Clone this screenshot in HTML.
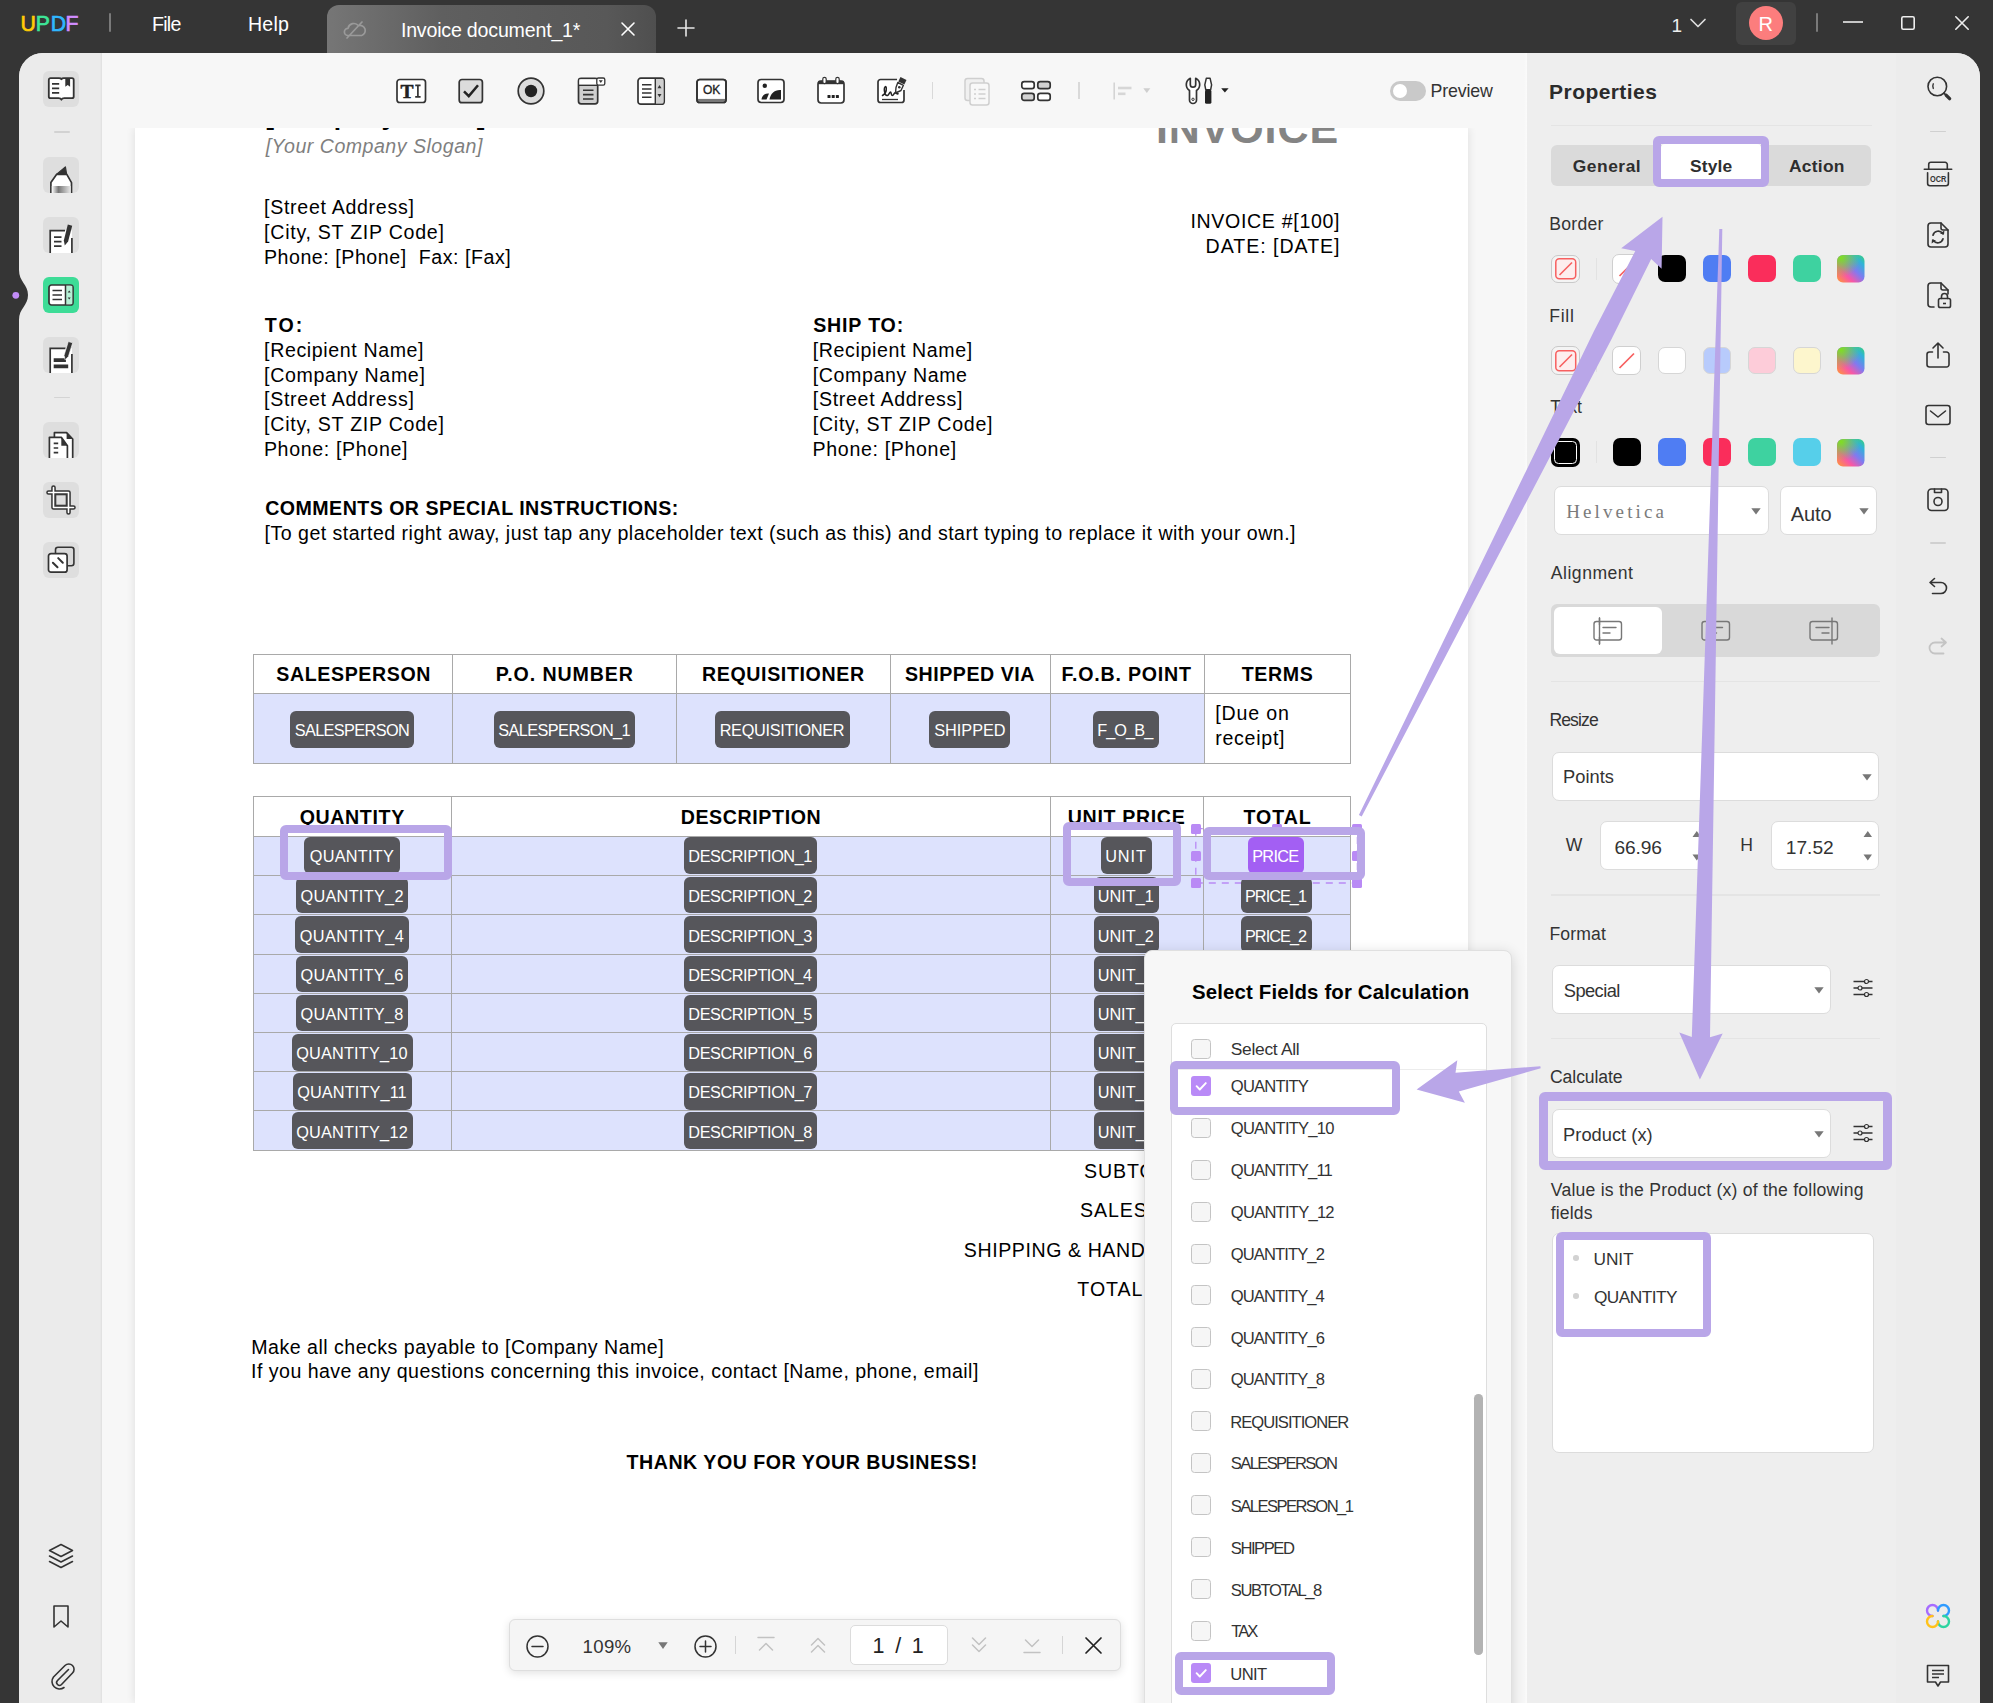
<!DOCTYPE html>
<html><head><meta charset="utf-8"><title>UPDF</title>
<style>
html,body{margin:0;padding:0;}
body{width:1993px;height:1703px;overflow:hidden;background:#353535;position:relative;font-family:"Liberation Sans",sans-serif;}
.b{position:absolute;box-sizing:border-box;}
.t{position:absolute;white-space:pre;}
svg{overflow:visible;}
</style></head><body>
<div class="b main" style="left:19.00px;top:53.00px;width:1961.00px;height:1650.00px;background:#ededed;border-radius:24px 24px 0 0;overflow:hidden;"></div>
<div class="b " style="left:19.00px;top:53.00px;width:83.20px;height:1650.00px;background:#ebebeb;border-radius:24px 0 0 0;box-shadow:inset -2px 0 2px -1px rgba(0,0,0,0.05);"></div>
<div class="b " style="left:102.00px;top:53.00px;width:1425.00px;height:1650.00px;background:#f7f7f7;"></div>
<div class="b " style="left:134.90px;top:127.90px;width:1332.90px;height:1575.10px;background:#fff;box-shadow:0 0 9px rgba(0,0,0,0.11);"></div>
<div class="b " style="left:1896.00px;top:53.00px;width:84.00px;height:1650.00px;background:#ececec;border-radius:0 24px 0 0;"></div>
<span class="t" style="left:20.46px;top:11.81px;font-size:21.20px;line-height:23.68px;color:#ffcb05;font-family:'Liberation Sans',sans-serif;-webkit-text-stroke:0.7px #ffcb05;">U</span>
<span class="t" style="left:35.86px;top:11.81px;font-size:21.20px;line-height:23.68px;color:#3de597;font-family:'Liberation Sans',sans-serif;-webkit-text-stroke:0.7px #3de597;">P</span>
<span class="t" style="left:50.66px;top:11.81px;font-size:21.20px;line-height:23.68px;color:#2fb6ff;font-family:'Liberation Sans',sans-serif;-webkit-text-stroke:0.7px #2fb6ff;">D</span>
<span class="t" style="left:65.46px;top:11.81px;font-size:21.20px;line-height:23.68px;color:#d18cff;font-family:'Liberation Sans',sans-serif;-webkit-text-stroke:0.7px #d18cff;">F</span>
<div class="b " style="left:109.10px;top:13.40px;width:2.00px;height:18.40px;background:#7a7a7a;border-radius:1px;"></div>
<span class="t" style="left:151.89px;top:13.66px;font-size:19.60px;line-height:21.89px;color:#fff;font-family:'Liberation Sans',sans-serif;letter-spacing:-0.668px;">File</span>
<span class="t" style="left:247.99px;top:13.66px;font-size:19.60px;line-height:21.89px;color:#fff;font-family:'Liberation Sans',sans-serif;letter-spacing:0.173px;">Help</span>
<div class="b " style="left:327.00px;top:5.00px;width:329.30px;height:48.00px;background:linear-gradient(90deg,#767676 0%,#5f5f5f 35%,#585858 85%,#4f4f4f 100%);border-radius:12px 12px 0 0;"></div>
<span class="t" style="left:400.89px;top:19.66px;font-size:19.60px;line-height:21.89px;color:#fff;font-family:'Liberation Sans',sans-serif;letter-spacing:-0.191px;">Invoice document_1*</span>
<svg class="b" style="left:343.00px;top:18.00px;" width="24" height="24" viewBox="0 0 24 24" fill="none"><path d="M5 17.5a3.6 3.6 0 0 1 0-7.2 6 6 0 0 1 10.5-2.6 4.8 4.8 0 0 1 3.2 9.8zM4 20L19 4" stroke="#9a9a9a" stroke-width="1.7" stroke-linecap="round" stroke-linejoin="round"/></svg>
<svg class="b" style="left:621.00px;top:22.00px;" width="14" height="14" viewBox="0 0 14 14" fill="none"><path d="M1 1L13 13M13 1L1 13" stroke="#fff" stroke-width="1.6" stroke-linecap="round"/></svg>
<svg class="b" style="left:677.00px;top:19.00px;" width="18" height="18" viewBox="0 0 18 18" fill="none"><path d="M9 1V17M1 9H17" stroke="#e6e6e6" stroke-width="1.6" stroke-linecap="round"/></svg>
<span class="t" style="left:1671.55px;top:14.61px;font-size:19.00px;line-height:21.22px;color:#eee;font-family:'Liberation Sans',sans-serif;">1</span>
<svg class="b" style="left:1690.00px;top:18.00px;" width="16" height="10" viewBox="0 0 16 10" fill="none"><path d="M1 1.5L8 8.5L15 1.5" stroke="#ddd" stroke-width="1.7" stroke-linecap="round" stroke-linejoin="round"/></svg>
<div class="b " style="left:1736.00px;top:2.00px;width:60.00px;height:43.00px;background:#414141;border-radius:6px;"></div>
<div class="b " style="left:1749.00px;top:6.00px;width:34.00px;height:34.00px;background:#fc7d7d;border-radius:50%;"></div>
<span class="t" style="left:1758.42px;top:13.20px;font-size:20.00px;line-height:22.34px;color:#fff;font-family:'Liberation Sans',sans-serif;">R</span>
<div class="b " style="left:1816.30px;top:13.40px;width:1.90px;height:18.40px;background:#7a7a7a;border-radius:1px;"></div>
<svg class="b" style="left:1843.00px;top:21.00px;" width="20" height="2" viewBox="0 0 20 2" fill="none"><path d="M0 1H20" stroke="#eee" stroke-width="1.6"/></svg>
<svg class="b" style="left:1901.00px;top:16.00px;" width="14" height="14" viewBox="0 0 14 14" fill="none"><rect x="0.8" y="0.8" width="12.4" height="12.4" rx="1.5" stroke="#eee" stroke-width="1.6"/></svg>
<svg class="b" style="left:1955.00px;top:16.00px;" width="14" height="14" viewBox="0 0 14 14" fill="none"><path d="M0.8 0.8L13.2 13.2M13.2 0.8L0.8 13.2" stroke="#eee" stroke-width="1.6" stroke-linecap="round"/></svg>
<svg class="b" style="left:0.00px;top:270.00px;" width="30" height="50" viewBox="0 0 30 50" fill="none"><path d="M19 0 C19 12 28 14 28 25 C28 36 19 38 19 50 L0 50 L0 0Z" fill="#353535"/><circle cx="15.8" cy="25.3" r="3.4" fill="#c28cf7"/></svg>
<div class="b" style="left:134px;top:127.9px;width:1334px;height:40px;overflow:hidden;">
<span class="t" style="left:131.21px;top:-25.68px;font-size:26.50px;line-height:29.60px;color:#000;font-family:'Liberation Sans',sans-serif;letter-spacing:0.196px;font-weight:700;">[Company Name]</span>
<span class="t" style="left:1021.92px;top:-24.32px;font-size:43.00px;line-height:48.03px;color:#848484;font-family:'Liberation Sans',sans-serif;letter-spacing:0.891px;font-weight:700;">INVOICE</span>
</div>
<span class="t" style="left:265.67px;top:135.66px;font-size:19.60px;line-height:21.89px;color:#7f7f7f;font-family:'Liberation Sans',sans-serif;letter-spacing:0.487px;font-style:italic;">[Your Company Slogan]</span>
<span class="t" style="left:264.10px;top:197.16px;font-size:19.60px;line-height:21.89px;color:#000;font-family:'Liberation Sans',sans-serif;letter-spacing:0.689px;">[Street Address]</span>
<span class="t" style="left:264.10px;top:221.96px;font-size:19.60px;line-height:21.89px;color:#000;font-family:'Liberation Sans',sans-serif;letter-spacing:0.730px;">[City, ST ZIP Code]</span>
<span class="t" style="left:263.89px;top:246.86px;font-size:19.60px;line-height:21.89px;color:#000;font-family:'Liberation Sans',sans-serif;letter-spacing:0.554px;">Phone: [Phone]  Fax: [Fax]</span>
<span class="t" style="left:1190.39px;top:211.46px;font-size:19.60px;line-height:21.89px;color:#000;font-family:'Liberation Sans',sans-serif;letter-spacing:0.667px;">INVOICE #[100]</span>
<span class="t" style="left:1205.59px;top:236.46px;font-size:19.60px;line-height:21.89px;color:#000;font-family:'Liberation Sans',sans-serif;letter-spacing:0.962px;">DATE: [DATE]</span>
<span class="t" style="left:264.78px;top:315.06px;font-size:19.60px;line-height:21.89px;color:#000;font-family:'Liberation Sans',sans-serif;letter-spacing:2.107px;font-weight:700;">TO:</span>
<span class="t" style="left:264.10px;top:339.86px;font-size:19.60px;line-height:21.89px;color:#000;font-family:'Liberation Sans',sans-serif;letter-spacing:0.611px;">[Recipient Name]</span>
<span class="t" style="left:264.10px;top:364.61px;font-size:19.60px;line-height:21.89px;color:#000;font-family:'Liberation Sans',sans-serif;letter-spacing:0.638px;">[Company Name]</span>
<span class="t" style="left:264.10px;top:389.36px;font-size:19.60px;line-height:21.89px;color:#000;font-family:'Liberation Sans',sans-serif;letter-spacing:0.689px;">[Street Address]</span>
<span class="t" style="left:264.10px;top:414.11px;font-size:19.60px;line-height:21.89px;color:#000;font-family:'Liberation Sans',sans-serif;letter-spacing:0.730px;">[City, ST ZIP Code]</span>
<span class="t" style="left:263.89px;top:438.86px;font-size:19.60px;line-height:21.89px;color:#000;font-family:'Liberation Sans',sans-serif;letter-spacing:0.651px;">Phone: [Phone]</span>
<span class="t" style="left:813.24px;top:315.26px;font-size:19.60px;line-height:21.89px;color:#000;font-family:'Liberation Sans',sans-serif;letter-spacing:0.817px;font-weight:700;">SHIP TO:</span>
<span class="t" style="left:812.80px;top:339.86px;font-size:19.60px;line-height:21.89px;color:#000;font-family:'Liberation Sans',sans-serif;letter-spacing:0.611px;">[Recipient Name]</span>
<span class="t" style="left:812.80px;top:364.61px;font-size:19.60px;line-height:21.89px;color:#000;font-family:'Liberation Sans',sans-serif;letter-spacing:0.601px;">[Company Name</span>
<span class="t" style="left:812.80px;top:389.36px;font-size:19.60px;line-height:21.89px;color:#000;font-family:'Liberation Sans',sans-serif;letter-spacing:0.689px;">[Street Address]</span>
<span class="t" style="left:812.80px;top:414.11px;font-size:19.60px;line-height:21.89px;color:#000;font-family:'Liberation Sans',sans-serif;letter-spacing:0.730px;">[City, ST ZIP Code]</span>
<span class="t" style="left:812.59px;top:438.86px;font-size:19.60px;line-height:21.89px;color:#000;font-family:'Liberation Sans',sans-serif;letter-spacing:0.651px;">Phone: [Phone]</span>
<span class="t" style="left:265.20px;top:498.36px;font-size:19.60px;line-height:21.89px;color:#000;font-family:'Liberation Sans',sans-serif;letter-spacing:0.469px;font-weight:700;">COMMENTS OR SPECIAL INSTRUCTIONS:</span>
<span class="t" style="left:264.60px;top:523.36px;font-size:19.60px;line-height:21.89px;color:#000;font-family:'Liberation Sans',sans-serif;letter-spacing:0.461px;">[To get started right away, just tap any placeholder text (such as this) and start typing to replace it with your own.]</span>
<span class="t" style="left:251.29px;top:1336.66px;font-size:19.60px;line-height:21.89px;color:#000;font-family:'Liberation Sans',sans-serif;letter-spacing:0.481px;">Make all checks payable to [Company Name]</span>
<span class="t" style="left:251.09px;top:1361.06px;font-size:19.60px;line-height:21.89px;color:#000;font-family:'Liberation Sans',sans-serif;letter-spacing:0.457px;">If you have any questions concerning this invoice, contact [Name, phone, email]</span>
<span class="t" style="left:626.58px;top:1451.56px;font-size:19.60px;line-height:21.89px;color:#000;font-family:'Liberation Sans',sans-serif;letter-spacing:0.512px;font-weight:700;">THANK YOU FOR YOUR BUSINESS!</span>
<span class="t" style="left:1083.91px;top:1160.76px;font-size:19.60px;line-height:21.89px;color:#000;font-family:'Liberation Sans',sans-serif;letter-spacing:0.940px;">SUBTOTAL</span>
<span class="t" style="left:1080.11px;top:1200.46px;font-size:19.60px;line-height:21.89px;color:#000;font-family:'Liberation Sans',sans-serif;letter-spacing:0.856px;">SALES TAX</span>
<span class="t" style="left:963.81px;top:1240.16px;font-size:19.60px;line-height:21.89px;color:#000;font-family:'Liberation Sans',sans-serif;letter-spacing:0.569px;">SHIPPING &amp; HANDLING</span>
<span class="t" style="left:1077.36px;top:1279.36px;font-size:19.60px;line-height:21.89px;color:#000;font-family:'Liberation Sans',sans-serif;letter-spacing:0.940px;">TOTAL DUE</span>
<div class="b " style="left:253.20px;top:693.50px;width:951.00px;height:70.50px;background:#dde2fd;"></div>
<div class="b " style="left:252.60px;top:654.00px;width:1098.40px;height:1.15px;background:#a9a9a9;"></div>
<div class="b " style="left:252.60px;top:693.00px;width:1098.40px;height:1.15px;background:#a9a9a9;"></div>
<div class="b " style="left:252.60px;top:763.00px;width:1098.40px;height:1.15px;background:#a9a9a9;"></div>
<div class="b " style="left:253.00px;top:654.80px;width:1.15px;height:109.20px;background:#a9a9a9;"></div>
<div class="b " style="left:452.00px;top:654.80px;width:1.15px;height:109.20px;background:#a9a9a9;"></div>
<div class="b " style="left:676.00px;top:654.80px;width:1.15px;height:109.20px;background:#a9a9a9;"></div>
<div class="b " style="left:890.00px;top:654.80px;width:1.15px;height:109.20px;background:#a9a9a9;"></div>
<div class="b " style="left:1050.00px;top:654.80px;width:1.15px;height:109.20px;background:#a9a9a9;"></div>
<div class="b " style="left:1204.00px;top:654.80px;width:1.15px;height:109.20px;background:#a9a9a9;"></div>
<div class="b " style="left:1350.00px;top:654.80px;width:1.15px;height:109.20px;background:#a9a9a9;"></div>
<span class="t" style="left:276.19px;top:664.26px;font-size:19.60px;line-height:21.89px;color:#000;font-family:'Liberation Sans',sans-serif;letter-spacing:0.626px;font-weight:700;">SALESPERSON</span>
<span class="t" style="left:495.74px;top:664.26px;font-size:19.60px;line-height:21.89px;color:#000;font-family:'Liberation Sans',sans-serif;letter-spacing:0.906px;font-weight:700;">P.O. NUMBER</span>
<span class="t" style="left:701.94px;top:664.26px;font-size:19.60px;line-height:21.89px;color:#000;font-family:'Liberation Sans',sans-serif;letter-spacing:0.631px;font-weight:700;">REQUISITIONER</span>
<span class="t" style="left:904.89px;top:664.26px;font-size:19.60px;line-height:21.89px;color:#000;font-family:'Liberation Sans',sans-serif;letter-spacing:0.541px;font-weight:700;">SHIPPED VIA</span>
<span class="t" style="left:1061.49px;top:664.26px;font-size:19.60px;line-height:21.89px;color:#000;font-family:'Liberation Sans',sans-serif;letter-spacing:0.786px;font-weight:700;">F.O.B. POINT</span>
<span class="t" style="left:1241.78px;top:664.26px;font-size:19.60px;line-height:21.89px;color:#000;font-family:'Liberation Sans',sans-serif;letter-spacing:0.596px;font-weight:700;">TERMS</span>
<span class="t" style="left:1215.20px;top:703.36px;font-size:19.60px;line-height:21.89px;color:#000;font-family:'Liberation Sans',sans-serif;letter-spacing:0.837px;">[Due on</span>
<span class="t" style="left:1215.30px;top:728.06px;font-size:19.60px;line-height:21.89px;color:#000;font-family:'Liberation Sans',sans-serif;letter-spacing:0.703px;">receipt]</span>
<div class="b " style="left:253.20px;top:836.50px;width:1097.30px;height:313.50px;background:#dde2fd;"></div>
<div class="b " style="left:252.60px;top:796.00px;width:1098.40px;height:1.15px;background:#a9a9a9;"></div>
<div class="b " style="left:252.60px;top:836.00px;width:1098.40px;height:1.15px;background:#a9a9a9;"></div>
<div class="b " style="left:252.60px;top:875.00px;width:1098.40px;height:1.15px;background:#a9a9a9;"></div>
<div class="b " style="left:252.60px;top:914.00px;width:1098.40px;height:1.15px;background:#a9a9a9;"></div>
<div class="b " style="left:252.60px;top:954.00px;width:1098.40px;height:1.15px;background:#a9a9a9;"></div>
<div class="b " style="left:252.60px;top:993.00px;width:1098.40px;height:1.15px;background:#a9a9a9;"></div>
<div class="b " style="left:252.60px;top:1032.00px;width:1098.40px;height:1.15px;background:#a9a9a9;"></div>
<div class="b " style="left:252.60px;top:1071.00px;width:1098.40px;height:1.15px;background:#a9a9a9;"></div>
<div class="b " style="left:252.60px;top:1110.00px;width:1098.40px;height:1.15px;background:#a9a9a9;"></div>
<div class="b " style="left:252.60px;top:1150.00px;width:1098.40px;height:1.15px;background:#a9a9a9;"></div>
<div class="b " style="left:253.00px;top:797.00px;width:1.15px;height:353.20px;background:#a9a9a9;"></div>
<div class="b " style="left:451.00px;top:797.00px;width:1.15px;height:353.20px;background:#a9a9a9;"></div>
<div class="b " style="left:1050.00px;top:797.00px;width:1.15px;height:353.20px;background:#a9a9a9;"></div>
<div class="b " style="left:1203.00px;top:797.00px;width:1.15px;height:353.20px;background:#a9a9a9;"></div>
<div class="b " style="left:1350.00px;top:797.00px;width:1.15px;height:353.20px;background:#a9a9a9;"></div>
<span class="t" style="left:299.65px;top:807.26px;font-size:19.60px;line-height:21.89px;color:#000;font-family:'Liberation Sans',sans-serif;letter-spacing:0.635px;font-weight:700;">QUANTITY</span>
<span class="t" style="left:680.64px;top:807.26px;font-size:19.60px;line-height:21.89px;color:#000;font-family:'Liberation Sans',sans-serif;letter-spacing:0.618px;font-weight:700;">DESCRIPTION</span>
<span class="t" style="left:1067.82px;top:807.26px;font-size:19.60px;line-height:21.89px;color:#000;font-family:'Liberation Sans',sans-serif;letter-spacing:0.652px;font-weight:700;">UNIT PRICE</span>
<span class="t" style="left:1243.53px;top:807.26px;font-size:19.60px;line-height:21.89px;color:#000;font-family:'Liberation Sans',sans-serif;letter-spacing:0.953px;font-weight:700;">TOTAL</span>
<svg class="b" style="left:1190.00px;top:822.00px;" width="176" height="68" viewBox="0 0 176 68" fill="none"><path d="M5.800 6.700V61M5.800 61H167.400M167.400 61V6.700M5.800 6.700H167.400" stroke="#b98af5" stroke-width="1.300" stroke-dasharray="7 6" fill="none"/></svg>
<div class="b " style="left:1190.80px;top:823.70px;width:10.00px;height:10.00px;background:#b98af5;border-radius:1.5px;"></div>
<div class="b " style="left:1190.80px;top:850.80px;width:10.00px;height:10.00px;background:#b98af5;border-radius:1.5px;"></div>
<div class="b " style="left:1190.80px;top:878.00px;width:10.00px;height:10.00px;background:#b98af5;border-radius:1.5px;"></div>
<div class="b " style="left:1271.60px;top:823.70px;width:10.00px;height:10.00px;background:#b98af5;border-radius:1.5px;"></div>
<div class="b " style="left:1271.60px;top:878.00px;width:10.00px;height:10.00px;background:#b98af5;border-radius:1.5px;"></div>
<div class="b " style="left:1352.40px;top:823.70px;width:10.00px;height:10.00px;background:#b98af5;border-radius:1.5px;"></div>
<div class="b " style="left:1352.40px;top:850.80px;width:10.00px;height:10.00px;background:#b98af5;border-radius:1.5px;"></div>
<div class="b " style="left:1352.40px;top:878.00px;width:10.00px;height:10.00px;background:#b98af5;border-radius:1.5px;"></div>
<div class="b " style="left:290.00px;top:710.70px;width:124.00px;height:37.30px;background:#56565b;border-radius:6px;"></div>
<span class="t" style="left:294.76px;top:721.30px;font-size:16.30px;line-height:18.21px;color:#fff;font-family:'Liberation Sans',sans-serif;letter-spacing:-0.633px;">SALESPERSON</span>
<div class="b " style="left:494.00px;top:710.70px;width:141.00px;height:37.30px;background:#56565b;border-radius:6px;"></div>
<span class="t" style="left:498.26px;top:721.30px;font-size:16.30px;line-height:18.21px;color:#fff;font-family:'Liberation Sans',sans-serif;letter-spacing:-0.583px;">SALESPERSON_1</span>
<div class="b " style="left:715.00px;top:710.70px;width:135.00px;height:37.30px;background:#56565b;border-radius:6px;"></div>
<span class="t" style="left:719.66px;top:721.30px;font-size:16.30px;line-height:18.21px;color:#fff;font-family:'Liberation Sans',sans-serif;letter-spacing:-0.292px;">REQUISITIONER</span>
<div class="b " style="left:929.40px;top:710.70px;width:81.00px;height:37.30px;background:#56565b;border-radius:6px;"></div>
<span class="t" style="left:934.16px;top:721.30px;font-size:16.30px;line-height:18.21px;color:#fff;font-family:'Liberation Sans',sans-serif;letter-spacing:-0.007px;">SHIPPED</span>
<div class="b " style="left:1093.00px;top:710.70px;width:66.00px;height:37.30px;background:#56565b;border-radius:6px;"></div>
<span class="t" style="left:1097.16px;top:721.30px;font-size:16.30px;line-height:18.21px;color:#fff;font-family:'Liberation Sans',sans-serif;letter-spacing:-0.910px;">F_O_B_</span>
<div class="b " style="left:304.00px;top:837.00px;width:96.00px;height:37.00px;background:#56565b;border-radius:6px;"></div>
<span class="t" style="left:309.73px;top:847.45px;font-size:16.30px;line-height:18.21px;color:#fff;font-family:'Liberation Sans',sans-serif;letter-spacing:0.246px;">QUANTITY</span>
<div class="b " style="left:684.20px;top:837.00px;width:133.00px;height:37.00px;background:#56565b;border-radius:6px;"></div>
<span class="t" style="left:688.36px;top:847.45px;font-size:16.30px;line-height:18.21px;color:#fff;font-family:'Liberation Sans',sans-serif;letter-spacing:-0.450px;">DESCRIPTION_1</span>
<div class="b " style="left:1100.50px;top:837.00px;width:51.00px;height:37.00px;background:#56565b;border-radius:6px;"></div>
<span class="t" style="left:1105.24px;top:847.45px;font-size:16.30px;line-height:18.21px;color:#fff;font-family:'Liberation Sans',sans-serif;letter-spacing:0.868px;">UNIT</span>
<div class="b " style="left:1248.00px;top:837.00px;width:56.00px;height:37.00px;background:#a35ff3;border-radius:6px;"></div>
<span class="t" style="left:1252.16px;top:847.45px;font-size:16.30px;line-height:18.21px;color:#fff;font-family:'Liberation Sans',sans-serif;letter-spacing:-0.695px;">PRICE</span>
<div class="b " style="left:295.75px;top:877.10px;width:112.50px;height:36.40px;background:#56565b;border-radius:6px;"></div>
<span class="t" style="left:300.48px;top:887.25px;font-size:16.30px;line-height:18.21px;color:#fff;font-family:'Liberation Sans',sans-serif;letter-spacing:0.283px;">QUANTITY_2</span>
<div class="b " style="left:684.20px;top:877.10px;width:133.00px;height:36.40px;background:#56565b;border-radius:6px;"></div>
<span class="t" style="left:688.36px;top:887.25px;font-size:16.30px;line-height:18.21px;color:#fff;font-family:'Liberation Sans',sans-serif;letter-spacing:-0.448px;">DESCRIPTION_2</span>
<div class="b " style="left:1093.50px;top:877.10px;width:65.00px;height:36.40px;background:#56565b;border-radius:6px;"></div>
<span class="t" style="left:1097.74px;top:887.25px;font-size:16.30px;line-height:18.21px;color:#fff;font-family:'Liberation Sans',sans-serif;letter-spacing:-0.021px;">UNIT_1</span>
<div class="b " style="left:1240.80px;top:877.10px;width:71.00px;height:36.40px;background:#56565b;border-radius:6px;"></div>
<span class="t" style="left:1244.96px;top:887.25px;font-size:16.30px;line-height:18.21px;color:#fff;font-family:'Liberation Sans',sans-serif;letter-spacing:-0.969px;">PRICE_1</span>
<div class="b " style="left:295.00px;top:916.20px;width:114.00px;height:36.70px;background:#56565b;border-radius:6px;"></div>
<span class="t" style="left:299.73px;top:926.50px;font-size:16.30px;line-height:18.21px;color:#fff;font-family:'Liberation Sans',sans-serif;letter-spacing:0.412px;">QUANTITY_4</span>
<div class="b " style="left:684.20px;top:916.20px;width:133.00px;height:36.70px;background:#56565b;border-radius:6px;"></div>
<span class="t" style="left:688.36px;top:926.50px;font-size:16.30px;line-height:18.21px;color:#fff;font-family:'Liberation Sans',sans-serif;letter-spacing:-0.456px;">DESCRIPTION_3</span>
<div class="b " style="left:1093.50px;top:916.20px;width:65.00px;height:36.70px;background:#56565b;border-radius:6px;"></div>
<span class="t" style="left:1097.74px;top:926.50px;font-size:16.30px;line-height:18.21px;color:#fff;font-family:'Liberation Sans',sans-serif;letter-spacing:-0.017px;">UNIT_2</span>
<div class="b " style="left:1240.80px;top:916.20px;width:71.00px;height:36.70px;background:#56565b;border-radius:6px;"></div>
<span class="t" style="left:1244.96px;top:926.50px;font-size:16.30px;line-height:18.21px;color:#fff;font-family:'Liberation Sans',sans-serif;letter-spacing:-0.965px;">PRICE_2</span>
<div class="b " style="left:295.75px;top:955.60px;width:112.50px;height:36.50px;background:#56565b;border-radius:6px;"></div>
<span class="t" style="left:300.48px;top:965.80px;font-size:16.30px;line-height:18.21px;color:#fff;font-family:'Liberation Sans',sans-serif;letter-spacing:0.272px;">QUANTITY_6</span>
<div class="b " style="left:684.20px;top:955.60px;width:133.00px;height:36.50px;background:#56565b;border-radius:6px;"></div>
<span class="t" style="left:688.36px;top:965.80px;font-size:16.30px;line-height:18.21px;color:#fff;font-family:'Liberation Sans',sans-serif;letter-spacing:-0.476px;">DESCRIPTION_4</span>
<div class="b " style="left:1093.50px;top:955.60px;width:65.00px;height:36.50px;background:#56565b;border-radius:6px;"></div>
<span class="t" style="left:1097.74px;top:965.80px;font-size:16.30px;line-height:18.21px;color:#fff;font-family:'Liberation Sans',sans-serif;letter-spacing:-0.037px;">UNIT_3</span>
<div class="b " style="left:295.75px;top:994.80px;width:112.50px;height:36.50px;background:#56565b;border-radius:6px;"></div>
<span class="t" style="left:300.48px;top:1005.00px;font-size:16.30px;line-height:18.21px;color:#fff;font-family:'Liberation Sans',sans-serif;letter-spacing:0.271px;">QUANTITY_8</span>
<div class="b " style="left:684.20px;top:994.80px;width:133.00px;height:36.50px;background:#56565b;border-radius:6px;"></div>
<span class="t" style="left:688.36px;top:1005.00px;font-size:16.30px;line-height:18.21px;color:#fff;font-family:'Liberation Sans',sans-serif;letter-spacing:-0.459px;">DESCRIPTION_5</span>
<div class="b " style="left:1093.50px;top:994.80px;width:65.00px;height:36.50px;background:#56565b;border-radius:6px;"></div>
<span class="t" style="left:1097.74px;top:1005.00px;font-size:16.30px;line-height:18.21px;color:#fff;font-family:'Liberation Sans',sans-serif;letter-spacing:-0.085px;">UNIT_4</span>
<div class="b " style="left:291.50px;top:1034.00px;width:121.00px;height:36.50px;background:#56565b;border-radius:6px;"></div>
<span class="t" style="left:296.23px;top:1044.20px;font-size:16.30px;line-height:18.21px;color:#fff;font-family:'Liberation Sans',sans-serif;letter-spacing:0.180px;">QUANTITY_10</span>
<div class="b " style="left:684.20px;top:1034.00px;width:133.00px;height:36.50px;background:#56565b;border-radius:6px;"></div>
<span class="t" style="left:688.36px;top:1044.20px;font-size:16.30px;line-height:18.21px;color:#fff;font-family:'Liberation Sans',sans-serif;letter-spacing:-0.456px;">DESCRIPTION_6</span>
<div class="b " style="left:1093.50px;top:1034.00px;width:65.00px;height:36.50px;background:#56565b;border-radius:6px;"></div>
<span class="t" style="left:1097.74px;top:1044.20px;font-size:16.30px;line-height:18.21px;color:#fff;font-family:'Liberation Sans',sans-serif;letter-spacing:-0.044px;">UNIT_5</span>
<div class="b " style="left:292.50px;top:1073.20px;width:119.00px;height:36.50px;background:#56565b;border-radius:6px;"></div>
<span class="t" style="left:297.23px;top:1083.40px;font-size:16.30px;line-height:18.21px;color:#fff;font-family:'Liberation Sans',sans-serif;letter-spacing:0.117px;">QUANTITY_11</span>
<div class="b " style="left:684.20px;top:1073.20px;width:133.00px;height:36.50px;background:#56565b;border-radius:6px;"></div>
<span class="t" style="left:688.36px;top:1083.40px;font-size:16.30px;line-height:18.21px;color:#fff;font-family:'Liberation Sans',sans-serif;letter-spacing:-0.448px;">DESCRIPTION_7</span>
<div class="b " style="left:1093.50px;top:1073.20px;width:65.00px;height:36.50px;background:#56565b;border-radius:6px;"></div>
<span class="t" style="left:1097.74px;top:1083.40px;font-size:16.30px;line-height:18.21px;color:#fff;font-family:'Liberation Sans',sans-serif;letter-spacing:-0.037px;">UNIT_6</span>
<div class="b " style="left:291.50px;top:1112.40px;width:121.00px;height:36.50px;background:#56565b;border-radius:6px;"></div>
<span class="t" style="left:296.23px;top:1122.60px;font-size:16.30px;line-height:18.21px;color:#fff;font-family:'Liberation Sans',sans-serif;letter-spacing:0.199px;">QUANTITY_12</span>
<div class="b " style="left:684.20px;top:1112.40px;width:133.00px;height:36.50px;background:#56565b;border-radius:6px;"></div>
<span class="t" style="left:688.36px;top:1122.60px;font-size:16.30px;line-height:18.21px;color:#fff;font-family:'Liberation Sans',sans-serif;letter-spacing:-0.457px;">DESCRIPTION_8</span>
<div class="b " style="left:1093.50px;top:1112.40px;width:65.00px;height:36.50px;background:#56565b;border-radius:6px;"></div>
<span class="t" style="left:1097.74px;top:1122.60px;font-size:16.30px;line-height:18.21px;color:#fff;font-family:'Liberation Sans',sans-serif;letter-spacing:-0.017px;">UNIT_7</span>
<div class="b " style="left:102.00px;top:53.00px;width:1425.00px;height:74.90px;background:#f7f7f7;"></div>
<svg class="b" style="left:396.00px;top:76.30px;" width="30" height="30" viewBox="0 0 30 30" fill="none"><rect x="1" y="3.5" width="28.5" height="23" rx="2.8" fill="#fff" stroke="#333" stroke-width="1.7"/><text x="4.6" y="21.8" font-family="Liberation Serif,serif" font-weight="700" font-size="19.5" fill="#222" stroke="#222" stroke-width="0.5">T</text><path d="M19.2 9.3h5.4M21.9 9.3v11.6M19.2 20.9h5.4" stroke="#333" stroke-width="1.7"/></svg>
<svg class="b" style="left:456.00px;top:76.30px;" width="30" height="30" viewBox="0 0 30 30" fill="none"><rect x="3.2" y="3.5" width="23.2" height="23.2" rx="2.8" fill="#dcdcdc" stroke="#333" stroke-width="1.7"/><path d="M8 15.3l4.8 4.8L22 9.2" stroke="#222" stroke-width="2.5" fill="none"/></svg>
<svg class="b" style="left:516.00px;top:76.30px;" width="30" height="30" viewBox="0 0 30 30" fill="none"><circle cx="15" cy="15" r="12.8" fill="#dcdcdc" stroke="#333" stroke-width="1.7"/><circle cx="15" cy="15" r="6.2" fill="#222"/></svg>
<svg class="b" style="left:576.00px;top:76.30px;" width="30" height="30" viewBox="0 0 30 30" fill="none"><rect x="2.5" y="2.3" width="19.2" height="25.6" rx="2.6" fill="#cfcfcf" stroke="#333" stroke-width="1.7"/><path d="M3.3 3.300h17.600v5.700H3.300z" fill="#fff"/><path d="M2.500 9.300h19" stroke="#333" stroke-width="1.400"/><path d="M7 14.200h10.500M7 18.600h10.500M7 23h10.500" stroke="#333" stroke-width="1.600"/><rect x="20.800" y="2" width="8" height="7.200" rx="1.600" fill="#fff" stroke="#333" stroke-width="1.300"/><path d="M22.800 4.300h4l-2 2.800z" fill="#333"/></svg>
<svg class="b" style="left:636.00px;top:76.30px;" width="30" height="30" viewBox="0 0 30 30" fill="none"><rect x="2" y="2.200" width="26.200" height="26" rx="2.800" fill="#fff" stroke="#333" stroke-width="1.700"/><path d="M19.500 3h7a1 1 0 0 1 1 1v22.500a1 1 0 0 1-1 1h-7z" fill="#cfcfcf"/><path d="M19.300 2.500v25.500" stroke="#333" stroke-width="1.400"/><path d="M6 8.800h9.500M6 12.900h9.500M6 17h9.500M6 21.300h9.500" stroke="#333" stroke-width="1.500"/><path d="M21.500 12.300l2-3.300 2 3.300zM21.500 18l2 3.300 2-3.300z" fill="#333"/></svg>
<svg class="b" style="left:696.00px;top:76.30px;" width="30" height="30" viewBox="0 0 30 30" fill="none"><rect x="1" y="3.500" width="29" height="23" rx="2.800" fill="#fff" stroke="#333" stroke-width="1.700"/><path d="M2 24.300h27" stroke="#777" stroke-width="2.800"/><rect x="1" y="3.500" width="29" height="23" rx="2.800" fill="none" stroke="#333" stroke-width="1.700"/><text x="7" y="18" font-family="Liberation Sans,sans-serif" font-weight="400" font-size="12" fill="#222" stroke="#222" stroke-width="0.350">OK</text></svg>
<svg class="b" style="left:756.00px;top:76.30px;" width="30" height="30" viewBox="0 0 30 30" fill="none"><rect x="2" y="3.500" width="26" height="23" rx="3.200" fill="#fff" stroke="#333" stroke-width="1.700"/><circle cx="8.800" cy="9.800" r="2.200" fill="#222"/><path d="M5.500 23.500c.5-4 3.500-6.500 7.500-6l-2.500 6zM13.500 23.500c1-6 5-10 11.500-9.500v9.500z" fill="#222"/></svg>
<svg class="b" style="left:816.00px;top:76.30px;" width="30" height="30" viewBox="0 0 30 30" fill="none"><rect x="2" y="5" width="26" height="22" rx="3.200" fill="#fff" stroke="#333" stroke-width="1.700"/><path d="M2.500 6.500h25" stroke="#333" stroke-width="3.400"/><rect x="6.800" y="1.300" width="3.400" height="6.400" rx="1.700" fill="#fff" stroke="#333" stroke-width="1.200"/><rect x="19.800" y="1.300" width="3.400" height="6.400" rx="1.700" fill="#fff" stroke="#333" stroke-width="1.200"/><rect x="11.500" y="19" width="3" height="3" rx=".6" fill="#222"/><rect x="15.700" y="19" width="3" height="3" rx=".6" fill="#222"/><rect x="19.900" y="19" width="3" height="3" rx=".6" fill="#222"/></svg>
<svg class="b" style="left:876.00px;top:76.30px;" width="30" height="30" viewBox="0 0 30 30" fill="none"><path d="M21 3.500H4.500a2.500 2.500 0 0 0-2.500 2.500v18a2.500 2.500 0 0 0 2.500 2.500h21a2.500 2.500 0 0 0 2.500-2.500V14" stroke="#333" stroke-width="1.700" fill="#fff"/><path d="M6.500 19.500c2.500-1.500 4-4.500 3.800-7.500-.2-2.500-2.200-1.500-2 2 .2 3 1.300 6 3.200 5.500 1.500-.4 2-3.500 3-3.500s.3 3.500 1.800 3.500 1.500-2.500 2.800-2.700 1.500 1.500 3 1" stroke="#222" stroke-width="1.500" fill="none" stroke-linecap="round"/><path d="M24.500 1l6 3-2.200 4.500-6-3z" fill="#333"/><path d="M21.800 6.500l5.600 2.800-2.400 5.200-5.500 2.500.5-5.500z" fill="#fff" stroke="#333" stroke-width="1.400" stroke-linejoin="round"/><circle cx="23.300" cy="11.300" r="1.300" fill="#333"/><path d="M6 23.500h16" stroke="#333" stroke-width="1.300"/></svg>
<div class="b " style="left:931.50px;top:82.00px;width:1.20px;height:17.00px;background:#d9d9d9;"></div>
<svg class="b" style="left:962.00px;top:76.30px;" width="30" height="30" viewBox="0 0 30 30" fill="none"><rect x="3" y="2.5" width="19" height="22" rx="2.5" fill="#f0f0f0" stroke="#cfcfcf" stroke-width="1.5"/><rect x="8" y="7" width="19" height="22" rx="2.5" fill="#f8f8f8" stroke="#cfcfcf" stroke-width="1.5"/><path d="M12 13.5h2M16.5 13.5h7M12 18h2M16.5 18h7M12 22.5h2M16.5 22.5h7" stroke="#cfcfcf" stroke-width="1.4"/></svg>
<svg class="b" style="left:1021.00px;top:76.20px;" width="30" height="30" viewBox="0 0 30 30" fill="none"><rect x="0.8" y="5.700" width="12.400" height="7" rx="2.400" stroke="#333" stroke-width="1.700" fill="#fff"/><rect x="16.800" y="5.700" width="12.400" height="7" rx="2.400" stroke="#333" stroke-width="1.700" fill="#d2d2d2"/><rect x="0.8" y="17.300" width="12.400" height="7" rx="2.400" stroke="#333" stroke-width="1.700" fill="#d2d2d2"/><rect x="16.800" y="17.300" width="12.400" height="7" rx="2.400" stroke="#333" stroke-width="1.700" fill="#fff"/></svg>
<div class="b " style="left:1078.40px;top:82.00px;width:1.20px;height:17.00px;background:#d9d9d9;"></div>
<svg class="b" style="left:1105.50px;top:76.00px;" width="30" height="30" viewBox="0 0 30 30" fill="none"><path d="M8.200 6.500v17" stroke="#d2d2d2" stroke-width="1.500"/><path d="M12 12h13.500" stroke="#d6d6d6" stroke-width="2.600"/><path d="M12 17.800h7.500" stroke="#d6d6d6" stroke-width="2.600"/></svg>
<svg class="b" style="left:1142.50px;top:88.30px;" width="8" height="6" viewBox="0 0 8 6" fill="none"><path d="M0.300 0.300h7L3.800 5z" fill="#cfcfcf"/></svg>
<svg class="b" style="left:1185.00px;top:76.00px;" width="30" height="30" viewBox="0 0 30 30" fill="none"><path d="M5.300 2.300v6.200a2.700 2.700 0 0 0 5.400 0V2.300a7 7 0 0 1 .8 12.200V24a3.500 3.500 0 0 1-7 0v-9.500a7 7 0 0 1 .8-12.200z" stroke="#333" stroke-width="1.700" fill="#fff" stroke-linejoin="round"/><circle cx="8" cy="23.300" r="1.200" fill="none" stroke="#333" stroke-width="1"/><path d="M21.300 2.300h3.800l1.500 6.500-1 5h-4.800l-1-5z" fill="#fff" stroke="#333" stroke-width="1.500" stroke-linejoin="round"/><rect x="20" y="13.800" width="6.400" height="14" rx="1.600" fill="#222"/></svg>
<svg class="b" style="left:1220.80px;top:88.00px;" width="8" height="5" viewBox="0 0 8 5" fill="none"><path d="M0.200 0.200h7.400L3.900 4.600z" fill="#222"/></svg>
<div class="b " style="left:1390.00px;top:81.00px;width:35.50px;height:19.50px;background:#c9c9c9;border-radius:10px;"></div>
<div class="b " style="left:1392.50px;top:83.50px;width:14.50px;height:14.50px;background:#fff;border-radius:50%;"></div>
<span class="t" style="left:1430.54px;top:81.69px;font-size:17.80px;line-height:19.88px;color:#333;font-family:'Liberation Sans',sans-serif;letter-spacing:-0.149px;">Preview</span>
<div class="b " style="left:43.00px;top:70.50px;width:36.00px;height:36.00px;background:#dedede;border-radius:6px;"></div>
<svg class="b" style="left:46.00px;top:74.00px;" width="30" height="30" viewBox="0 0 30 30" fill="none"><path d="M4.500 4.200h8.500c1 0 2 .3 2.400 1 .4-.7 1.400-1 2.400-1H26a1.700 1.700 0 0 1 1.700 1.700v16.600A1.700 1.700 0 0 1 26 24.200h-7.800c-1.200 0-2.300.5-2.800 1.500-.5-1-1.600-1.500-2.800-1.500H4.500a1.700 1.700 0 0 1-1.700-1.700V5.900a1.700 1.700 0 0 1 1.700-1.700z" fill="#fff" stroke="#333" stroke-width="1.800" stroke-linejoin="round"/><path d="M6 9.800h7.200M6 14.300h7.200M6 18.800h7.200" stroke="#333" stroke-width="1.700"/><path d="M19.300 4.200v8.600l2.400-1.800 2.400 1.800V4.200z" fill="#333"/></svg>
<div class="b " style="left:53.50px;top:130.80px;width:16.00px;height:1.80px;background:#d2d2d2;border-radius:1px;"></div>
<div class="b " style="left:43.00px;top:157.00px;width:36.00px;height:36.00px;background:#dedede;border-radius:6px;"></div>
<div class="b" style="left:43px;top:157px;width:36px;height:36px;overflow:hidden;border-radius:6px;">
<svg class="b" style="left:3.00px;top:3.50px;" width="30" height="34" viewBox="0 0 30 34" fill="none"><defs><linearGradient id="hg" x1="0" x2="1"><stop offset="0" stop-color="#fff"/><stop offset=".35" stop-color="#777"/><stop offset="1" stop-color="#e8e8e8"/></linearGradient></defs><path d="M10.700 13.200L19.400 5.900l1.200 7.300z" fill="#333" stroke="#333" stroke-width="1.200" stroke-linejoin="round"/><path d="M10.500 13.400h10.300l4.700 8.200v12H4.900v-12z" fill="#fff" stroke="#333" stroke-width="1.700" stroke-linejoin="round"/><rect x="5.800" y="25" width="18.900" height="9" fill="url(#hg)"/></svg>
</div>
<div class="b " style="left:43.00px;top:217.00px;width:36.00px;height:36.00px;background:#dedede;border-radius:6px;"></div>
<div class="b" style="left:43px;top:217px;width:36px;height:36px;overflow:hidden;border-radius:6px;">
<svg class="b" style="left:3.00px;top:4.00px;" width="30" height="34" viewBox="0 0 30 34" fill="none"><path d="M4.200 34V9.600h21.700V34z" fill="#fff"/><path d="M4.200 34V9.600H19M25.900 17V34" fill="none" stroke="#333" stroke-width="1.700"/><path d="M8 16.100h7.500M8 20.700h7.500M8 25.100h7.500" stroke="#333" stroke-width="1.700"/><path d="M21.800 3.600L26.200 4.800 22.100 20.600 18.800 24.500 17.800 19.500z" fill="#333"/></svg>
</div>
<div class="b " style="left:43.00px;top:277.30px;width:36.00px;height:36.00px;background:#3ddc97;border-radius:6px;"></div>
<svg class="b" style="left:46.00px;top:280.30px;" width="30" height="30" viewBox="0 0 30 30" fill="none"><rect x="3" y="5" width="24" height="20" rx="2.500" fill="#fff" stroke="#333" stroke-width="1.700"/><rect x="19.500" y="5.800" width="6.800" height="18.400" fill="#b5f0d5"/><path d="M19.500 5v20" stroke="#333" stroke-width="1.500"/><path d="M6.500 10.500h9.500M6.500 15h9.500M6.500 19.500h9.500" stroke="#333" stroke-width="1.700"/><path d="M21.700 12.500l1.500-2 1.500 2zM21.700 17.500l1.500 2 1.500-2z" fill="#333"/></svg>
<div class="b " style="left:43.00px;top:337.00px;width:36.00px;height:36.00px;background:#dedede;border-radius:6px;"></div>
<div class="b" style="left:43px;top:337px;width:36px;height:36px;overflow:hidden;border-radius:6px;">
<svg class="b" style="left:3.00px;top:3.00px;" width="30" height="34" viewBox="0 0 30 34" fill="none"><path d="M4.200 34V8.300h21.700V34z" fill="#fff"/><path d="M4.200 34V8.300H19.500M25.900 14V34" fill="none" stroke="#333" stroke-width="1.700"/><path d="M7.700 18.200h12.200v3.800H7.700zM7.700 24.400h14.500v3.800H7.700z" fill="#333"/><path d="M22.300 1.600L26.700 2.800 22.400 16.500 19.100 19.800 18.100 15.300z" fill="#333" stroke="#fff" stroke-width=".6"/></svg>
</div>
<div class="b " style="left:53.50px;top:396.60px;width:16.00px;height:1.60px;background:#d4d4d4;border-radius:1px;"></div>
<div class="b " style="left:43.00px;top:422.30px;width:36.00px;height:36.00px;background:#dedede;border-radius:6px;"></div>
<div class="b" style="left:43px;top:422.300px;width:36px;height:36px;overflow:hidden;border-radius:6px;">
<svg class="b" style="left:3.00px;top:4.00px;" width="30" height="34" viewBox="0 0 30 34" fill="none"><path d="M8.400 34V6.700H20.600L26.700 13V34z" fill="#fff" stroke="#333" stroke-width="1.700" stroke-linejoin="round"/><path d="M20.600 6.700V13h6.100z" fill="#333"/><path d="M3.400 34V11.300H15.300L21.400 19.700V34z" fill="#fff" stroke="#333" stroke-width="1.700" stroke-linejoin="round"/><path d="M15.300 11.300V19.700h6.100z" fill="#333"/><path d="M7.700 17.400h4.500M7.700 22h4.500M7.700 26.600h4.500" stroke="#333" stroke-width="1.700"/></svg>
</div>
<div class="b " style="left:43.00px;top:482.20px;width:36.00px;height:36.00px;background:#dedede;border-radius:6px;"></div>
<svg class="b" style="left:46.00px;top:485.20px;" width="30" height="30" viewBox="0 0 30 30" fill="none"><path d="M2.500 7.500h20v20M7.500 2.500v20h20" fill="none" stroke="#333" stroke-width="4.600" stroke-linejoin="round" stroke-linecap="round"/><path d="M2.500 7.500h20v20M7.500 2.500v20h20" fill="none" stroke="#fff" stroke-width="1.600" stroke-linejoin="round" stroke-linecap="round"/><rect x="9.700" y="9.700" width="10.600" height="10.600" fill="#dedede" stroke="#333" stroke-width="1.200"/></svg>
<div class="b " style="left:43.00px;top:542.10px;width:36.00px;height:36.00px;background:#dedede;border-radius:6px;"></div>
<svg class="b" style="left:46.00px;top:545.10px;" width="30" height="30" viewBox="0 0 30 30" fill="none"><rect x="9.500" y="2.300" width="18.400" height="18.400" rx="2.500" fill="#d9d9d9" stroke="#333" stroke-width="1.600"/><rect x="2.500" y="8.600" width="18.600" height="18.600" rx="2.500" fill="#fff" stroke="#333" stroke-width="1.700"/><path d="M6.900 17.700l4.600 4.600M12.200 13.100l4.600 4.600" stroke="#333" stroke-width="2" stroke-linecap="round"/></svg>
<svg class="b" style="left:46.00px;top:1541.00px;" width="30" height="30" viewBox="0 0 30 30" fill="none"><path d="M15 3.500L26.500 9.500 15 15.500 3.500 9.500z" stroke="#333" stroke-width="1.6" fill="none" stroke-linejoin="round" stroke-linecap="round"/><path d="M3.500 15L15 21l11.500-6M3.500 20.500L15 26.500l11.500-6" stroke="#333" stroke-width="1.6" fill="none" stroke-linejoin="round" stroke-linecap="round"/></svg>
<svg class="b" style="left:46.00px;top:1601.00px;" width="30" height="30" viewBox="0 0 30 30" fill="none"><path d="M8 5h14v21l-7-6-7 6z" stroke="#333" stroke-width="1.6" fill="none" stroke-linejoin="round" stroke-linecap="round"/></svg>
<svg class="b" style="left:46.00px;top:1661.00px;" width="30" height="30" viewBox="0 0 30 30" fill="none"><path d="M22.500 8.500l-11 11a2.800 2.800 0 0 0 4 4l11-11.500a5.200 5.200 0 0 0-7.500-7.500L7.500 16a7.500 7.500 0 0 0 10.500 10.500" stroke="#333" stroke-width="1.6" fill="none" stroke-linejoin="round" stroke-linecap="round"/></svg>
<svg class="b" style="left:1923.00px;top:74.00px;" width="30" height="30" viewBox="0 0 30 30" fill="none"><circle cx="14.300" cy="12.500" r="9.300" stroke="#333" stroke-width="1.6" fill="none" stroke-linejoin="round" stroke-linecap="round"/><path d="M20.900 19.100l5.500 5.300" stroke="#333" stroke-width="1.800" stroke-linecap="round"/><path d="M23.300 21.400l3.300 3.200" stroke="#333" stroke-width="3.400" stroke-linecap="round"/><path d="M10.300 9.800a5.500 5.500 0 0 0 0 4.600" stroke="#333" stroke-width="1.400" fill="none" stroke-linecap="round"/></svg>
<div class="b " style="left:1930.00px;top:130.60px;width:16.00px;height:1.80px;background:#d0d0d0;border-radius:1px;"></div>
<svg class="b" style="left:1923.00px;top:159.00px;" width="30" height="30" viewBox="0 0 30 30" fill="none"><path d="M1.300 10.300h27.400M5.700 10.300V5.500a2.200 2.200 0 0 1 2.200-2.200h14.200a2.200 2.200 0 0 1 2.200 2.200v4.800M4.600 13.800v10.500a2.400 2.400 0 0 0 2.400 2.400h16a2.400 2.400 0 0 0 2.400-2.400V13.800" stroke="#333" stroke-width="1.6" fill="none" stroke-linejoin="round" stroke-linecap="round"/><text x="6.900" y="23.300" font-family="Liberation Sans,sans-serif" font-weight="700" font-size="9.200" fill="#333" textLength="16.400" lengthAdjust="spacingAndGlyphs">OCR</text></svg>
<svg class="b" style="left:1923.00px;top:220.00px;" width="30" height="30" viewBox="0 0 30 30" fill="none"><path d="M18 3H8a3 3 0 0 0-3 3v18a3 3 0 0 0 3 3h14a3 3 0 0 0 3-3V10z" stroke="#333" stroke-width="1.6" fill="none" stroke-linejoin="round" stroke-linecap="round"/><path d="M18 3v5a2 2 0 0 0 2 2h5" stroke="#333" stroke-width="1.6" fill="none" stroke-linejoin="round" stroke-linecap="round"/><path d="M10 15.200A5.300 5.300 0 0 1 19.600 13.600M20 18.800A5.300 5.300 0 0 1 10.400 20.400" stroke="#333" stroke-width="1.700" fill="none" stroke-linecap="round"/><path d="M17 13.600l4 1.200.4-4.200zM13 20.400l-4-1.200-.4 4.200z" fill="#333"/></svg>
<svg class="b" style="left:1923.00px;top:280.00px;" width="30" height="30" viewBox="0 0 30 30" fill="none"><path d="M11 27H8a3 3 0 0 1-3-3V6a3 3 0 0 1 3-3h10l7 7v4" stroke="#333" stroke-width="1.6" fill="none" stroke-linejoin="round" stroke-linecap="round"/><path d="M18 3v5a2 2 0 0 0 2 2h5" stroke="#333" stroke-width="1.6" fill="none" stroke-linejoin="round" stroke-linecap="round"/><rect x="15.500" y="18.500" width="12" height="9" rx="1.800" stroke="#333" stroke-width="1.6" fill="none" stroke-linejoin="round" stroke-linecap="round"/><path d="M18.500 18.500v-2a3 3 0 0 1 6 0v2" stroke="#333" stroke-width="1.6" fill="none" stroke-linejoin="round" stroke-linecap="round"/><path d="M20 23.500h3" stroke="#333" stroke-width="1.600"/></svg>
<svg class="b" style="left:1923.00px;top:340.00px;" width="30" height="30" viewBox="0 0 30 30" fill="none"><path d="M9.500 12H6.500a2.500 2.500 0 0 0-2.500 2.500v10A2.500 2.500 0 0 0 6.500 27h17a2.500 2.500 0 0 0 2.500-2.500v-10a2.500 2.500 0 0 0-2.500-2.500h-3" stroke="#333" stroke-width="1.6" fill="none" stroke-linejoin="round" stroke-linecap="round"/><path d="M15 18V3M10 8l5-5 5 5" stroke="#333" stroke-width="1.6" fill="none" stroke-linejoin="round" stroke-linecap="round"/></svg>
<svg class="b" style="left:1923.00px;top:399.50px;" width="30" height="30" viewBox="0 0 30 30" fill="none"><rect x="3" y="5.500" width="24" height="19" rx="2.500" stroke="#333" stroke-width="1.6" fill="none" stroke-linejoin="round" stroke-linecap="round"/><path d="M7.500 11l7.500 6 7.500-6" stroke="#333" stroke-width="1.6" fill="none" stroke-linejoin="round" stroke-linecap="round"/></svg>
<div class="b " style="left:1930.00px;top:456.60px;width:16.00px;height:1.80px;background:#d0d0d0;border-radius:1px;"></div>
<svg class="b" style="left:1923.00px;top:485.00px;" width="30" height="30" viewBox="0 0 30 30" fill="none"><rect x="5" y="4" width="20" height="21.500" rx="3.500" stroke="#333" stroke-width="1.6" fill="none" stroke-linejoin="round" stroke-linecap="round"/><path d="M11.500 4v3.500h7V4" stroke="#333" stroke-width="1.6" fill="none" stroke-linejoin="round" stroke-linecap="round"/><circle cx="15" cy="16.500" r="4" stroke="#333" stroke-width="1.6" fill="none" stroke-linejoin="round" stroke-linecap="round"/></svg>
<div class="b " style="left:1930.00px;top:542.20px;width:16.00px;height:1.80px;background:#d0d0d0;border-radius:1px;"></div>
<svg class="b" style="left:1923.00px;top:573.50px;" width="30" height="30" viewBox="0 0 30 30" fill="none"><path d="M9.500 19.500H18a5.500 5.500 0 0 0 0-11H7.500M11.500 4.500L7 8.500l4.500 4" stroke="#333" stroke-width="1.6" fill="none" stroke-linejoin="round" stroke-linecap="round"/></svg>
<svg class="b" style="left:1923.00px;top:633.50px;" width="30" height="30" viewBox="0 0 30 30" fill="none"><path d="M20.500 19.500H12a5.500 5.500 0 0 1 0-11h10.500M18.500 4.500L23 8.500l-4.500 4" stroke="#c4c4c4" stroke-width="1.800" fill="none" stroke-linejoin="round" stroke-linecap="round"/></svg>
<svg class="b" style="left:1923.00px;top:1601.00px;" width="30" height="30" viewBox="0 0 30 30" fill="none"><path d="M15 9.500a5.500 5.500 0 1 0-5.500 5.500" stroke="#a66cff" stroke-width="2.400" fill="none" stroke-linecap="round"/><path d="M20.500 15a5.500 5.500 0 1 0-5.500-5.500" stroke="#2f9bff" stroke-width="2.400" fill="none" stroke-linecap="round"/><path d="M15 20.500a5.500 5.500 0 1 0 5.500-5.500" stroke="#2dd4a0" stroke-width="2.400" fill="none" stroke-linecap="round"/><path d="M9.500 15a5.500 5.500 0 1 0 5.500 5.500" stroke="#ffc21a" stroke-width="2.400" fill="none" stroke-linecap="round"/></svg>
<svg class="b" style="left:1923.00px;top:1661.00px;" width="30" height="30" viewBox="0 0 30 30" fill="none"><path d="M4.500 4.500h21v16.500h-8L15 25l-2.500-4h-8z" stroke="#333" stroke-width="1.6" fill="none" stroke-linejoin="round" stroke-linecap="round"/><path d="M9 9.500h12M9 13h12M9 16.500h7" stroke="#333" stroke-width="1.500"/></svg>
<div class="b " style="left:1523.50px;top:53.00px;width:3.50px;height:1650.00px;background:linear-gradient(90deg,#f7f7f7,#fbfbfb);"></div>
<div class="b " style="left:1527.00px;top:53.00px;width:369.00px;height:1650.00px;background:#eeeeee;"></div>
<span class="t" style="left:1549.10px;top:80.09px;font-size:21.00px;line-height:23.46px;color:#2b2b2b;font-family:'Liberation Sans',sans-serif;letter-spacing:0.432px;font-weight:700;">Properties</span>
<div class="b " style="left:1550.70px;top:125.20px;width:321.30px;height:1.20px;background:#e4e4e4;"></div>
<div class="b " style="left:1550.70px;top:145.30px;width:320.80px;height:40.90px;background:#dadada;border-radius:6px;"></div>
<div class="b " style="left:1661.30px;top:144.30px;width:99.30px;height:36.70px;background:#fff;border-radius:4px;"></div>
<span class="t" style="left:1572.79px;top:156.85px;font-size:17.40px;line-height:19.44px;color:#2e2e2e;font-family:'Liberation Sans',sans-serif;letter-spacing:0.524px;font-weight:700;">General</span>
<span class="t" style="left:1690.00px;top:156.85px;font-size:17.40px;line-height:19.44px;color:#2e2e2e;font-family:'Liberation Sans',sans-serif;letter-spacing:0.126px;font-weight:700;">Style</span>
<span class="t" style="left:1788.97px;top:156.85px;font-size:17.40px;line-height:19.44px;color:#2e2e2e;font-family:'Liberation Sans',sans-serif;letter-spacing:0.276px;font-weight:700;">Action</span>
<span class="t" style="left:1549.26px;top:215.07px;font-size:17.60px;line-height:19.66px;color:#333;font-family:'Liberation Sans',sans-serif;letter-spacing:0.281px;">Border</span>
<span class="t" style="left:1549.26px;top:306.57px;font-size:17.60px;line-height:19.66px;color:#333;font-family:'Liberation Sans',sans-serif;letter-spacing:0.713px;">Fill</span>
<span class="t" style="left:1550.30px;top:398.07px;font-size:17.60px;line-height:19.66px;color:#333;font-family:'Liberation Sans',sans-serif;letter-spacing:-0.251px;">Text</span>
<div class="b " style="left:1551.20px;top:254.60px;width:28.50px;height:28.50px;background:#f4f4f4;border:1.3px solid #c9c9c9;border-radius:7px;"></div>
<svg class="b" style="left:1554.70px;top:258.10px;" width="21.5" height="21.5" viewBox="0 0 21.5 21.5" fill="none"><rect x="0.8" y="0.8" width="19.900" height="19.900" rx="3.500" fill="#fdeeee" stroke="#f76060" stroke-width="1.500"/><path d="M4.500 17L17 4.500" stroke="#f76060" stroke-width="1.600"/></svg>
<div class="b " style="left:1596.00px;top:257.90px;width:1.20px;height:22.00px;background:#e2e2e2;"></div>
<div class="b " style="left:1611.80px;top:254.10px;width:29.50px;height:29.50px;background:#fff;border:1.3px solid #cfcfcf;border-radius:7px;"></div>
<svg class="b" style="left:1611.80px;top:254.10px;" width="29.5" height="29.5" viewBox="0 0 29.5 29.5" fill="none"><path d="M7.500 22L22 7.500" stroke="#f76060" stroke-width="1.700"/></svg>
<div class="b " style="left:1658.30px;top:254.90px;width:27.60px;height:27.60px;background:#000;border-radius:7px;"></div>
<div class="b " style="left:1703.30px;top:254.90px;width:27.60px;height:27.60px;background:#4f7df3;border-radius:7px;"></div>
<div class="b " style="left:1748.40px;top:254.90px;width:27.60px;height:27.60px;background:#fa2d5b;border-radius:7px;"></div>
<div class="b " style="left:1793.40px;top:254.90px;width:27.60px;height:27.60px;background:#3ed2a0;border-radius:7px;"></div>
<svg class="b" style="left:1836.80px;top:255.20px;" width="27.5" height="27.5" viewBox="0 0 27.5 27.5" fill="none"><defs><linearGradient id="rb1" x1="0" y1="1" x2="1" y2="0"><stop offset="0" stop-color="#ff9d2e"/><stop offset=".3" stop-color="#f857a6"/><stop offset=".55" stop-color="#7f7bf0"/><stop offset=".8" stop-color="#2fb3d8"/><stop offset="1" stop-color="#3cd36f"/></linearGradient><radialGradient id="rc1" cx="0.15" cy="0.1" r="0.7"><stop offset="0" stop-color="#7fe01f"/><stop offset="1" stop-color="#7fe01f" stop-opacity="0"/></radialGradient></defs><rect width="27.5" height="27.5" rx="6" fill="url(#rb1)"/><rect width="27.5" height="27.5" rx="6" fill="url(#rc1)"/></svg>
<div class="b " style="left:1551.20px;top:346.20px;width:28.50px;height:28.50px;background:#f4f4f4;border:1.3px solid #c9c9c9;border-radius:7px;"></div>
<svg class="b" style="left:1554.70px;top:349.70px;" width="21.5" height="21.5" viewBox="0 0 21.5 21.5" fill="none"><rect x="0.8" y="0.8" width="19.900" height="19.900" rx="3.500" fill="#fdeeee" stroke="#f76060" stroke-width="1.500"/><path d="M4.500 17L17 4.500" stroke="#f76060" stroke-width="1.600"/></svg>
<div class="b " style="left:1596.00px;top:349.50px;width:1.20px;height:22.00px;background:#e2e2e2;"></div>
<div class="b " style="left:1611.80px;top:345.70px;width:29.50px;height:29.50px;background:#fff;border:1.3px solid #cfcfcf;border-radius:7px;"></div>
<svg class="b" style="left:1611.80px;top:345.70px;" width="29.5" height="29.5" viewBox="0 0 29.5 29.5" fill="none"><path d="M7.500 22L22 7.500" stroke="#f76060" stroke-width="1.700"/></svg>
<div class="b " style="left:1658.30px;top:346.50px;width:27.60px;height:27.60px;background:#fff;border-radius:7px;border:1.3px solid #d6d6d6;"></div>
<div class="b " style="left:1703.30px;top:346.50px;width:27.60px;height:27.60px;background:#b8cbfc;border-radius:7px;border:1.3px solid #d6d6d6;"></div>
<div class="b " style="left:1748.40px;top:346.50px;width:27.60px;height:27.60px;background:#fdccd9;border-radius:7px;border:1.3px solid #d6d6d6;"></div>
<div class="b " style="left:1793.40px;top:346.50px;width:27.60px;height:27.60px;background:#fdf6cd;border-radius:7px;border:1.3px solid #d6d6d6;"></div>
<svg class="b" style="left:1836.80px;top:346.80px;" width="27.5" height="27.5" viewBox="0 0 27.5 27.5" fill="none"><defs><linearGradient id="rb2" x1="0" y1="1" x2="1" y2="0"><stop offset="0" stop-color="#ff9d2e"/><stop offset=".3" stop-color="#f857a6"/><stop offset=".55" stop-color="#7f7bf0"/><stop offset=".8" stop-color="#2fb3d8"/><stop offset="1" stop-color="#3cd36f"/></linearGradient><radialGradient id="rc2" cx="0.15" cy="0.1" r="0.7"><stop offset="0" stop-color="#7fe01f"/><stop offset="1" stop-color="#7fe01f" stop-opacity="0"/></radialGradient></defs><rect width="27.5" height="27.5" rx="6" fill="url(#rb2)"/><rect width="27.5" height="27.5" rx="6" fill="url(#rc2)"/></svg>
<div class="b " style="left:1551.20px;top:437.80px;width:28.80px;height:28.80px;background:#000;border-radius:7px;"></div>
<div class="b " style="left:1554.20px;top:440.80px;width:22.80px;height:22.80px;background:#000;border:1.6px solid #fff;border-radius:4.5px;"></div>
<div class="b " style="left:1596.00px;top:441.30px;width:1.20px;height:22.00px;background:#e2e2e2;"></div>
<div class="b " style="left:1613.00px;top:438.30px;width:27.60px;height:27.60px;background:#000;border-radius:7px;"></div>
<div class="b " style="left:1658.30px;top:438.30px;width:27.60px;height:27.60px;background:#4f7df3;border-radius:7px;"></div>
<div class="b " style="left:1703.30px;top:438.30px;width:27.60px;height:27.60px;background:#fa2d5b;border-radius:7px;"></div>
<div class="b " style="left:1748.40px;top:438.30px;width:27.60px;height:27.60px;background:#3ed2a0;border-radius:7px;"></div>
<div class="b " style="left:1793.40px;top:438.30px;width:27.60px;height:27.60px;background:#56cfea;border-radius:7px;"></div>
<svg class="b" style="left:1836.80px;top:438.60px;" width="27.5" height="27.5" viewBox="0 0 27.5 27.5" fill="none"><defs><linearGradient id="rb3" x1="0" y1="1" x2="1" y2="0"><stop offset="0" stop-color="#ff9d2e"/><stop offset=".3" stop-color="#f857a6"/><stop offset=".55" stop-color="#7f7bf0"/><stop offset=".8" stop-color="#2fb3d8"/><stop offset="1" stop-color="#3cd36f"/></linearGradient><radialGradient id="rc3" cx="0.15" cy="0.1" r="0.7"><stop offset="0" stop-color="#7fe01f"/><stop offset="1" stop-color="#7fe01f" stop-opacity="0"/></radialGradient></defs><rect width="27.5" height="27.5" rx="6" fill="url(#rb3)"/><rect width="27.5" height="27.5" rx="6" fill="url(#rc3)"/></svg>
<div class="b " style="left:1554.30px;top:485.80px;width:214.40px;height:49.70px;background:#fff;border:1.2px solid #dcdcdc;border-radius:7px;"></div>
<span class="t" style="left:1566.15px;top:501.27px;font-size:19.00px;line-height:21.22px;color:#7b7b7b;font-family:'Liberation Serif',serif;letter-spacing:3.127px;">Helvetica</span>
<svg class="b" style="left:1751.20px;top:508.15px;" width="10" height="7" viewBox="0 0 10 7" fill="none"><path d="M0.3 0.3h9.400L5 6.500z" fill="#777"/></svg>
<div class="b " style="left:1779.60px;top:485.80px;width:97.10px;height:49.70px;background:#fff;border:1.2px solid #dcdcdc;border-radius:7px;"></div>
<span class="t" style="left:1790.66px;top:502.70px;font-size:20.00px;line-height:22.34px;color:#333;font-family:'Liberation Sans',sans-serif;letter-spacing:-0.088px;">Auto</span>
<svg class="b" style="left:1859.20px;top:508.15px;" width="10" height="7" viewBox="0 0 10 7" fill="none"><path d="M0.3 0.3h9.400L5 6.500z" fill="#777"/></svg>
<span class="t" style="left:1550.87px;top:564.27px;font-size:17.60px;line-height:19.66px;color:#333;font-family:'Liberation Sans',sans-serif;letter-spacing:0.487px;">Alignment</span>
<div class="b " style="left:1550.90px;top:604.20px;width:329.50px;height:52.70px;background:#d9d9d9;border-radius:6px;"></div>
<div class="b " style="left:1553.70px;top:606.80px;width:108.30px;height:47.50px;background:#fff;border-radius:6px;"></div>
<svg class="b" style="left:1593.00px;top:617.00px;" width="30" height="28" viewBox="0 0 30 28" fill="none"><rect x="1" y="4.500" width="27.500" height="18.500" rx="2.500" stroke="#777" stroke-width="1.400" fill="none" stroke-linecap="round"/><path d="M6.500 1v26" stroke="#777" stroke-width="1.400" fill="none" stroke-linecap="round"/><path d="M10 10.500h13M10 16h7" stroke="#777" stroke-width="1.400" fill="none" stroke-linecap="round"/><rect x="5" y="8" width="3" height="12" fill="#fff" stroke="none"/><path d="M6.500 1v26" stroke="#777" stroke-width="1.400" fill="none" stroke-linecap="round"/></svg>
<svg class="b" style="left:1700.50px;top:617.00px;" width="30" height="28" viewBox="0 0 30 28" fill="none"><rect x="1" y="4.500" width="27.500" height="18.500" rx="2.500" stroke="#777" stroke-width="1.400" fill="none" stroke-linecap="round"/><path d="M8.500 10.500h13M8.500 16h7" stroke="#777" stroke-width="1.400" fill="none" stroke-linecap="round"/></svg>
<svg class="b" style="left:1809.00px;top:617.00px;" width="30" height="28" viewBox="0 0 30 28" fill="none"><rect x="1" y="4.500" width="27.500" height="18.500" rx="2.500" stroke="#777" stroke-width="1.400" fill="none" stroke-linecap="round"/><path d="M7 10.500h13M13 16h7" stroke="#777" stroke-width="1.400" fill="none" stroke-linecap="round"/><path d="M23 1v26" stroke="#777" stroke-width="1.400" fill="none" stroke-linecap="round"/></svg>
<div class="b " style="left:1550.70px;top:681.10px;width:329.30px;height:1.20px;background:#e4e4e4;"></div>
<span class="t" style="left:1549.46px;top:710.97px;font-size:17.60px;line-height:19.66px;color:#333;font-family:'Liberation Sans',sans-serif;letter-spacing:-0.914px;">Resize</span>
<div class="b " style="left:1551.70px;top:751.50px;width:327.60px;height:49.10px;background:#fff;border:1.2px solid #dcdcdc;border-radius:7px;"></div>
<span class="t" style="left:1563.10px;top:767.24px;font-size:18.30px;line-height:20.44px;color:#333;font-family:'Liberation Sans',sans-serif;letter-spacing:-0.000px;">Points</span>
<svg class="b" style="left:1861.80px;top:773.55px;" width="10" height="7" viewBox="0 0 10 7" fill="none"><path d="M0.3 0.3h9.400L5 6.500z" fill="#777"/></svg>
<span class="t" style="left:1565.82px;top:836.37px;font-size:17.60px;line-height:19.66px;color:#333;font-family:'Liberation Sans',sans-serif;">W</span>
<span class="t" style="left:1740.16px;top:836.37px;font-size:17.60px;line-height:19.66px;color:#333;font-family:'Liberation Sans',sans-serif;">H</span>
<div class="b " style="left:1599.50px;top:820.50px;width:108.80px;height:49.10px;background:#fff;border:1.2px solid #dcdcdc;border-radius:7px;"></div>
<span class="t" style="left:1614.53px;top:836.72px;font-size:19.20px;line-height:21.45px;color:#333;font-family:'Liberation Sans',sans-serif;letter-spacing:-0.182px;">66.96</span>
<svg class="b" style="left:1692.30px;top:829.50px;" width="10" height="32" viewBox="0 0 10 32" fill="none"><path d="M0.500 7h8.500L4.800 1zM0.500 24.500h8.500L4.800 30.500z" fill="#777"/></svg>
<div class="b " style="left:1770.50px;top:820.50px;width:108.80px;height:49.10px;background:#fff;border:1.2px solid #dcdcdc;border-radius:7px;"></div>
<span class="t" style="left:1785.84px;top:836.72px;font-size:19.20px;line-height:21.45px;color:#333;font-family:'Liberation Sans',sans-serif;letter-spacing:-0.030px;">17.52</span>
<svg class="b" style="left:1863.30px;top:829.50px;" width="10" height="32" viewBox="0 0 10 32" fill="none"><path d="M0.500 7h8.500L4.800 1zM0.500 24.500h8.500L4.800 30.500z" fill="#777"/></svg>
<div class="b " style="left:1550.70px;top:894.40px;width:329.30px;height:1.20px;background:#e4e4e4;"></div>
<span class="t" style="left:1549.46px;top:924.87px;font-size:17.60px;line-height:19.66px;color:#333;font-family:'Liberation Sans',sans-serif;letter-spacing:0.126px;">Format</span>
<div class="b " style="left:1551.70px;top:964.80px;width:279.80px;height:49.10px;background:#fff;border:1.2px solid #dcdcdc;border-radius:7px;"></div>
<span class="t" style="left:1563.77px;top:980.54px;font-size:18.30px;line-height:20.44px;color:#333;font-family:'Liberation Sans',sans-serif;letter-spacing:-0.561px;">Special</span>
<svg class="b" style="left:1814.00px;top:986.85px;" width="10" height="7" viewBox="0 0 10 7" fill="none"><path d="M0.3 0.3h9.400L5 6.500z" fill="#777"/></svg>
<svg class="b" style="left:1853.00px;top:978.20px;" width="20" height="20" viewBox="0 0 20 20" fill="none"><path d="M0.500 3.500h19M0.500 10h19M0.500 16.500h19" stroke="#333" stroke-width="1.300"/><circle cx="13.500" cy="3.500" r="2" fill="#eee" stroke="#333" stroke-width="1.200"/><circle cx="7" cy="10" r="2" fill="#eee" stroke="#333" stroke-width="1.200"/><circle cx="13.500" cy="16.500" r="2" fill="#eee" stroke="#333" stroke-width="1.200"/></svg>
<div class="b " style="left:1550.70px;top:1038.30px;width:329.30px;height:1.20px;background:#e4e4e4;"></div>
<span class="t" style="left:1550.01px;top:1068.47px;font-size:17.60px;line-height:19.66px;color:#333;font-family:'Liberation Sans',sans-serif;letter-spacing:-0.087px;">Calculate</span>
<div class="b " style="left:1551.70px;top:1108.70px;width:279.80px;height:49.10px;background:#fff;border:1.2px solid #dcdcdc;border-radius:7px;"></div>
<span class="t" style="left:1563.10px;top:1124.74px;font-size:18.30px;line-height:20.44px;color:#333;font-family:'Liberation Sans',sans-serif;letter-spacing:0.014px;">Product (x)</span>
<svg class="b" style="left:1814.00px;top:1130.75px;" width="10" height="7" viewBox="0 0 10 7" fill="none"><path d="M0.3 0.3h9.400L5 6.500z" fill="#777"/></svg>
<svg class="b" style="left:1853.00px;top:1122.60px;" width="20" height="20" viewBox="0 0 20 20" fill="none"><path d="M0.500 3.500h19M0.500 10h19M0.500 16.500h19" stroke="#333" stroke-width="1.300"/><circle cx="13.500" cy="3.500" r="2" fill="#eee" stroke="#333" stroke-width="1.200"/><circle cx="7" cy="10" r="2" fill="#eee" stroke="#333" stroke-width="1.200"/><circle cx="13.500" cy="16.500" r="2" fill="#eee" stroke="#333" stroke-width="1.200"/></svg>
<span class="t" style="left:1550.82px;top:1180.67px;font-size:17.60px;line-height:19.66px;color:#333;font-family:'Liberation Sans',sans-serif;letter-spacing:0.220px;">Value is the Product (x) of the following</span>
<span class="t" style="left:1550.65px;top:1204.17px;font-size:17.60px;line-height:19.66px;color:#333;font-family:'Liberation Sans',sans-serif;letter-spacing:0.159px;">fields</span>
<div class="b " style="left:1551.70px;top:1232.70px;width:322.20px;height:220.20px;background:#fff;border:1.2px solid #dcdcdc;border-radius:7px;"></div>
<span class="t" style="left:1593.47px;top:1250.14px;font-size:17.30px;line-height:19.32px;color:#333;font-family:'Liberation Sans',sans-serif;letter-spacing:-0.043px;">UNIT</span>
<span class="t" style="left:1593.98px;top:1288.14px;font-size:17.30px;line-height:19.32px;color:#333;font-family:'Liberation Sans',sans-serif;letter-spacing:-0.538px;">QUANTITY</span>
<div class="b " style="left:1573.00px;top:1255.00px;width:5.60px;height:5.60px;background:#d2d2d2;border-radius:50%;"></div>
<div class="b " style="left:1573.00px;top:1293.00px;width:5.60px;height:5.60px;background:#d2d2d2;border-radius:50%;"></div>
<div class="b " style="left:509.00px;top:1618.50px;width:612.00px;height:52.00px;background:#f5f5f5;border:1px solid #dedede;border-radius:6px;box-shadow:0 2px 8px rgba(0,0,0,0.12);"></div>
<svg class="b" style="left:526.00px;top:1634.50px;" width="23" height="23" viewBox="0 0 23 23" fill="none"><circle cx="11.500" cy="11.500" r="10.500" stroke="#333" stroke-width="1.500" fill="none" stroke-linecap="round" stroke-linejoin="round"/><path d="M6 11.500h11" stroke="#333" stroke-width="1.500" fill="none" stroke-linecap="round" stroke-linejoin="round"/></svg>
<span class="t" style="left:582.58px;top:1637.47px;font-size:18.60px;line-height:20.78px;color:#333;font-family:'Liberation Sans',sans-serif;letter-spacing:0.336px;">109%</span>
<svg class="b" style="left:658.00px;top:1641.50px;" width="10" height="8" viewBox="0 0 10 8" fill="none"><path d="M0.300 0.300h9.400L5 7z" fill="#777"/></svg>
<svg class="b" style="left:694.00px;top:1634.50px;" width="23" height="23" viewBox="0 0 23 23" fill="none"><circle cx="11.500" cy="11.500" r="10.500" stroke="#333" stroke-width="1.500" fill="none" stroke-linecap="round" stroke-linejoin="round"/><path d="M6 11.500h11M11.500 6v11" stroke="#333" stroke-width="1.500" fill="none" stroke-linecap="round" stroke-linejoin="round"/></svg>
<div class="b " style="left:734.50px;top:1636.00px;width:1.20px;height:18.00px;background:#d5d5d5;"></div>
<svg class="b" style="left:757.00px;top:1636.00px;" width="18" height="18" viewBox="0 0 18 18" fill="none"><path d="M1 1.500h16M2.500 14l6.500-6.500 6.500 6.500" stroke="#c2c2c2" stroke-width="1.500" fill="none" stroke-linecap="round" stroke-linejoin="round"/></svg>
<svg class="b" style="left:809.00px;top:1636.00px;" width="18" height="18" viewBox="0 0 18 18" fill="none"><path d="M2.500 9l6.500-6.500 6.500 6.500M2.500 16l6.500-6.500 6.500 6.500" stroke="#c2c2c2" stroke-width="1.500" fill="none" stroke-linecap="round" stroke-linejoin="round"/></svg>
<div class="b " style="left:850.00px;top:1624.50px;width:98.00px;height:40.50px;background:#fff;border:1px solid #dcdcdc;border-radius:5px;"></div>
<span class="t" style="left:872.61px;top:1633.84px;font-size:21.50px;line-height:24.02px;color:#222;font-family:'Liberation Sans',sans-serif;letter-spacing:2.338px;">1 / 1</span>
<svg class="b" style="left:970.00px;top:1636.00px;" width="18" height="18" viewBox="0 0 18 18" fill="none"><path d="M2.500 2l6.500 6.500 6.500-6.500M2.500 9l6.500 6.500 6.500-6.500" stroke="#c2c2c2" stroke-width="1.500" fill="none" stroke-linecap="round" stroke-linejoin="round"/></svg>
<svg class="b" style="left:1023.00px;top:1636.00px;" width="18" height="18" viewBox="0 0 18 18" fill="none"><path d="M2.500 4l6.500 6.500 6.500-6.500M1 16.500h16" stroke="#c2c2c2" stroke-width="1.500" fill="none" stroke-linecap="round" stroke-linejoin="round"/></svg>
<div class="b " style="left:1061.50px;top:1636.00px;width:1.20px;height:18.00px;background:#d5d5d5;"></div>
<svg class="b" style="left:1085.00px;top:1636.50px;" width="17" height="17" viewBox="0 0 17 17" fill="none"><path d="M1 1l15 15M16 1L1 16" stroke="#222" stroke-width="1.700" stroke-linecap="round"/></svg>
<div class="b " style="left:1144.20px;top:949.60px;width:367.80px;height:770.40px;background:#f7f7f7;border:1px solid #e0e0e0;border-radius:8px;box-shadow:0 3px 14px rgba(0,0,0,0.16);"></div>
<span class="t" style="left:1192.01px;top:981.04px;font-size:20.40px;line-height:22.79px;color:#000;font-family:'Liberation Sans',sans-serif;letter-spacing:0.148px;font-weight:700;">Select Fields for Calculation</span>
<div class="b " style="left:1170.50px;top:1023.40px;width:316.00px;height:696.60px;background:#fff;border:1.2px solid #dedede;border-radius:5px;"></div>
<div class="b " style="left:1171.50px;top:1068.80px;width:314.00px;height:1.20px;background:#ececec;"></div>
<div class="b " style="left:1190.90px;top:1038.50px;width:20.20px;height:20.20px;background:#f6f6f6;border:1.3px solid #c4c4c4;border-radius:3.5px;"></div>
<span class="t" style="left:1230.81px;top:1040.15px;font-size:17.40px;line-height:19.44px;color:#333;font-family:'Liberation Sans',sans-serif;letter-spacing:-0.291px;">Select All</span>
<div class="b " style="left:1190.90px;top:1076.10px;width:20.20px;height:20.20px;background:#b98af7;border-radius:3px;"></div>
<svg class="b" style="left:1190.90px;top:1076.10px;" width="20.2" height="20.2" viewBox="0 0 20.2 20.2" fill="none"><path d="M5.600 10.200l3.200 3.300 6-6.400" stroke="#fff" stroke-width="1.900" fill="none" stroke-linecap="round" stroke-linejoin="round"/></svg>
<span class="t" style="left:1230.81px;top:1078.48px;font-size:16.60px;line-height:18.54px;color:#333;font-family:'Liberation Sans',sans-serif;letter-spacing:-0.825px;">QUANTITY</span>
<div class="b " style="left:1190.90px;top:1117.70px;width:20.20px;height:20.20px;background:#f6f6f6;border:1.3px solid #c4c4c4;border-radius:3.5px;"></div>
<span class="t" style="left:1230.81px;top:1120.08px;font-size:16.60px;line-height:18.54px;color:#333;font-family:'Liberation Sans',sans-serif;letter-spacing:-0.799px;">QUANTITY_10</span>
<div class="b " style="left:1190.90px;top:1159.50px;width:20.20px;height:20.20px;background:#f6f6f6;border:1.3px solid #c4c4c4;border-radius:3.5px;"></div>
<span class="t" style="left:1230.81px;top:1161.88px;font-size:16.60px;line-height:18.54px;color:#333;font-family:'Liberation Sans',sans-serif;letter-spacing:-0.829px;">QUANTITY_11</span>
<div class="b " style="left:1190.90px;top:1201.80px;width:20.20px;height:20.20px;background:#f6f6f6;border:1.3px solid #c4c4c4;border-radius:3.5px;"></div>
<span class="t" style="left:1230.81px;top:1204.18px;font-size:16.60px;line-height:18.54px;color:#333;font-family:'Liberation Sans',sans-serif;letter-spacing:-0.780px;">QUANTITY_12</span>
<div class="b " style="left:1190.90px;top:1243.60px;width:20.20px;height:20.20px;background:#f6f6f6;border:1.3px solid #c4c4c4;border-radius:3.5px;"></div>
<span class="t" style="left:1230.81px;top:1245.98px;font-size:16.60px;line-height:18.54px;color:#333;font-family:'Liberation Sans',sans-serif;letter-spacing:-0.919px;">QUANTITY_2</span>
<div class="b " style="left:1190.90px;top:1285.20px;width:20.20px;height:20.20px;background:#f6f6f6;border:1.3px solid #c4c4c4;border-radius:3.5px;"></div>
<span class="t" style="left:1230.81px;top:1287.58px;font-size:16.60px;line-height:18.54px;color:#333;font-family:'Liberation Sans',sans-serif;letter-spacing:-0.924px;">QUANTITY_4</span>
<div class="b " style="left:1190.90px;top:1327.20px;width:20.20px;height:20.20px;background:#f6f6f6;border:1.3px solid #c4c4c4;border-radius:3.5px;"></div>
<span class="t" style="left:1230.81px;top:1329.58px;font-size:16.60px;line-height:18.54px;color:#333;font-family:'Liberation Sans',sans-serif;letter-spacing:-0.908px;">QUANTITY_6</span>
<div class="b " style="left:1190.90px;top:1369.10px;width:20.20px;height:20.20px;background:#f6f6f6;border:1.3px solid #c4c4c4;border-radius:3.5px;"></div>
<span class="t" style="left:1230.81px;top:1371.48px;font-size:16.60px;line-height:18.54px;color:#333;font-family:'Liberation Sans',sans-serif;letter-spacing:-0.909px;">QUANTITY_8</span>
<div class="b " style="left:1190.90px;top:1411.20px;width:20.20px;height:20.20px;background:#f6f6f6;border:1.3px solid #c4c4c4;border-radius:3.5px;"></div>
<span class="t" style="left:1230.24px;top:1413.58px;font-size:16.60px;line-height:18.54px;color:#333;font-family:'Liberation Sans',sans-serif;letter-spacing:-0.987px;">REQUISITIONER</span>
<div class="b " style="left:1190.90px;top:1453.10px;width:20.20px;height:20.20px;background:#f6f6f6;border:1.3px solid #c4c4c4;border-radius:3.5px;"></div>
<span class="t" style="left:1230.85px;top:1455.48px;font-size:16.60px;line-height:18.54px;color:#333;font-family:'Liberation Sans',sans-serif;letter-spacing:-1.652px;">SALESPERSON</span>
<div class="b " style="left:1190.90px;top:1495.20px;width:20.20px;height:20.20px;background:#f6f6f6;border:1.3px solid #c4c4c4;border-radius:3.5px;"></div>
<span class="t" style="left:1230.85px;top:1497.58px;font-size:16.60px;line-height:18.54px;color:#333;font-family:'Liberation Sans',sans-serif;letter-spacing:-1.578px;">SALESPERSON_1</span>
<div class="b " style="left:1190.90px;top:1537.30px;width:20.20px;height:20.20px;background:#f6f6f6;border:1.3px solid #c4c4c4;border-radius:3.5px;"></div>
<span class="t" style="left:1230.85px;top:1539.68px;font-size:16.60px;line-height:18.54px;color:#333;font-family:'Liberation Sans',sans-serif;letter-spacing:-1.472px;">SHIPPED</span>
<div class="b " style="left:1190.90px;top:1579.20px;width:20.20px;height:20.20px;background:#f6f6f6;border:1.3px solid #c4c4c4;border-radius:3.5px;"></div>
<span class="t" style="left:1230.85px;top:1581.58px;font-size:16.60px;line-height:18.54px;color:#333;font-family:'Liberation Sans',sans-serif;letter-spacing:-1.454px;">SUBTOTAL_8</span>
<div class="b " style="left:1190.90px;top:1621.10px;width:20.20px;height:20.20px;background:#f6f6f6;border:1.3px solid #c4c4c4;border-radius:3.5px;"></div>
<span class="t" style="left:1231.23px;top:1623.48px;font-size:16.60px;line-height:18.54px;color:#333;font-family:'Liberation Sans',sans-serif;letter-spacing:-1.916px;">TAX</span>
<div class="b " style="left:1190.90px;top:1663.20px;width:20.20px;height:20.20px;background:#b98af7;border-radius:3px;"></div>
<svg class="b" style="left:1190.90px;top:1663.20px;" width="20.2" height="20.2" viewBox="0 0 20.2 20.2" fill="none"><path d="M5.600 10.200l3.200 3.300 6-6.400" stroke="#fff" stroke-width="1.900" fill="none" stroke-linecap="round" stroke-linejoin="round"/></svg>
<span class="t" style="left:1230.32px;top:1665.58px;font-size:16.60px;line-height:18.54px;color:#333;font-family:'Liberation Sans',sans-serif;letter-spacing:-0.622px;">UNIT</span>
<div class="b " style="left:1474.30px;top:1393.50px;width:8.60px;height:261.50px;background:#b3b3b3;border-radius:4.3px;"></div>
<div class="b " style="left:1652.90px;top:135.90px;width:116.20px;height:50.80px;border:8.4px solid #b9a6e8;border-radius:6px;"></div>
<div class="b " style="left:280.00px;top:825.00px;width:172.00px;height:54.60px;border:8.4px solid #b9a6e8;border-radius:6px;"></div>
<div class="b " style="left:1063.30px;top:822.00px;width:117.40px;height:64.00px;border:8.6px solid #b9a6e8;border-radius:6px;"></div>
<div class="b " style="left:1203.30px;top:827.20px;width:162.00px;height:52.80px;border:8.4px solid #b9a6e8;border-radius:6px;"></div>
<div class="b " style="left:1169.50px;top:1061.00px;width:230.00px;height:53.50px;border:8.2px solid #b9a6e8;border-radius:6px;"></div>
<div class="b " style="left:1175.20px;top:1652.10px;width:160.20px;height:42.60px;border:8.2px solid #b9a6e8;border-radius:6px;"></div>
<div class="b " style="left:1538.80px;top:1091.90px;width:353.20px;height:78.30px;border:9.0px solid #b9a6e8;border-radius:6px;"></div>
<div class="b " style="left:1556.10px;top:1232.00px;width:154.50px;height:105.10px;border:8.2px solid #b9a6e8;border-radius:6px;"></div>
<svg class="b" style="left:0;top:0;pointer-events:none" width="1993" height="1703" viewBox="0 0 1993 1703"><path d="M1358.9 815.1L1594.0 331.1L1635.3 250.9L1621.2 248.3L1662.5 216.7L1661.6 268.7L1651.2 258.9L1611.2 339.8L1361.7 816.5Z" fill="#b9a6e8"/></svg>
<svg class="b" style="left:0;top:0;pointer-events:none" width="1993" height="1703" viewBox="0 0 1993 1703"><path d="M1722.3 229.0L1710.0 1037.3L1722.7 1033.6L1699.9 1079.5L1679.3 1032.6L1691.8 1036.9L1719.3 229.0Z" fill="#b9a6e8"/></svg>
<svg class="b" style="left:0;top:0;pointer-events:none" width="1993" height="1703" viewBox="0 0 1993 1703"><path d="M1540.7 1068.2L1458.8 1091.5L1464.9 1102.7L1416.6 1089.4L1457.3 1060.2L1455.5 1072.8L1540.3 1066.2Z" fill="#b9a6e8"/></svg>
</body></html>
